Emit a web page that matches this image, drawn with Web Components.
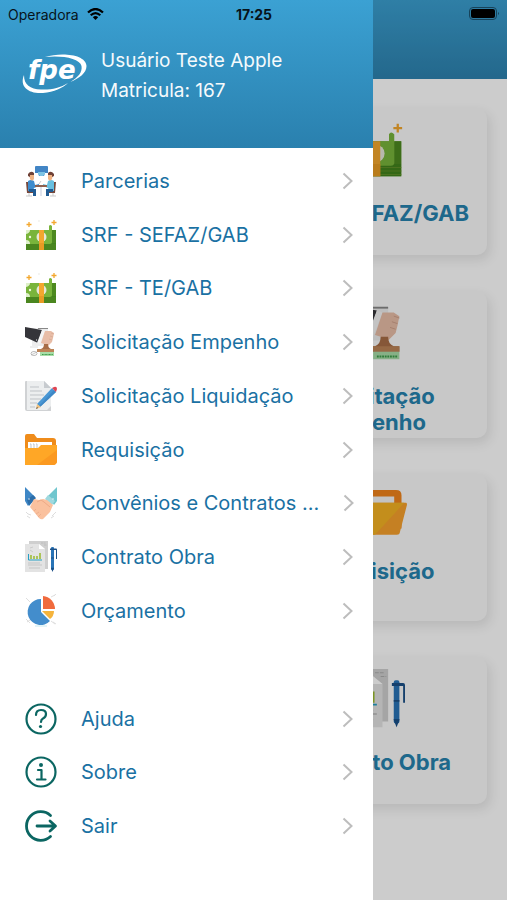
<!DOCTYPE html>
<html lang="pt-BR">
<head>
<meta charset="utf-8">
<meta name="viewport" content="width=device-width, initial-scale=1">
<title>FPE</title>
<style>
  html, body {
    height: 100%;
    margin: 0;
  }

  body {
    font-family: Inter, Roboto, "Liberation Sans", sans-serif;
    background: #fff;
    overflow: hidden;
  }
</style>
</head>
<body>
<fpe-app>
  <fpe-status-bar slot="status" data-carrier="Operadora" data-time="17:25"></fpe-status-bar>

  <fpe-drawer slot="drawer">
    <fpe-profile slot="profile" data-name="Usuário Teste Apple" data-info="Matricula: 167"></fpe-profile>
    <fpe-menu-item data-icon="meeting">Parcerias</fpe-menu-item>
    <fpe-menu-item data-icon="money">SRF - SEFAZ/GAB</fpe-menu-item>
    <fpe-menu-item data-icon="money">SRF - TE/GAB</fpe-menu-item>
    <fpe-menu-item data-icon="stamp">Solicitação Empenho</fpe-menu-item>
    <fpe-menu-item data-icon="note">Solicitação Liquidação</fpe-menu-item>
    <fpe-menu-item data-icon="folder">Requisição</fpe-menu-item>
    <fpe-menu-item data-icon="handshake">Convênios e Contratos ...</fpe-menu-item>
    <fpe-menu-item data-icon="contract">Contrato Obra</fpe-menu-item>
    <fpe-menu-item data-icon="pie">Orçamento</fpe-menu-item>
    <fpe-menu-item slot="footer" data-icon="help">Ajuda</fpe-menu-item>
    <fpe-menu-item slot="footer" data-icon="info">Sobre</fpe-menu-item>
    <fpe-menu-item slot="footer" data-icon="exit">Sair</fpe-menu-item>
  </fpe-drawer>

  <fpe-card data-icon="money">SRF - SEFAZ/GAB</fpe-card>
  <fpe-card data-icon="stamp">Solicitação Empenho</fpe-card>
  <fpe-card data-icon="openFolder">Requisição</fpe-card>
  <fpe-card data-icon="contract">Contrato Obra</fpe-card>
</fpe-app>

<script>
const icons = {
  meeting: {
    box: "0 0 32 32",
    art: `
      <path d="M11 1h11q1 0 1 1v6h-3l-1 3h-5l-1-3h-3V2q0-1 1-1z" fill="#4285c5"/>
      <path d="M13 7h7v2l-2 2h-3l-2-2z" fill="#7cc3e4"/>
      <path d="M1 17h3l1 9h5v2H2zM31 17h-3l-1 9h-5v2h8z" fill="#76483c"/>
      <path d="M4 28v3M1 31h6M28 28v3M25 31h6" stroke="#c9c9c9" fill="none"/>
      <path d="M3 16q3-2 6 0l1 4 4-1v2l-5 2-1 3H3z" fill="#3d8cce"/>
      <path d="M29 16q-3-2-6 0l-1 4-4-1v2l5 2 1 3h5z" fill="#67bfe0"/>
      <path d="M4 24h7v7H8v-4H4zM28 24h-7v7h3v-4h4z" fill="#215b93"/>
      <path d="M4 9h5v5q-2 3-4 0zM28 9h-5v5q2 3 4 0z" fill="#f0b282"/>
      <path d="M3 11V9q3-4 6-1v2H5v2zM29 11V9q-3-4-6-1v2h4v2z" fill="#704237"/>
      <path d="M10 20h12v2H10z" fill="#8e6150"/>
      <path d="M15 22h2v9h-2z" fill="#e1e4ed"/>
      <path d="m14 19 2-3" stroke="#ccc"/>`
  },
  money: {
    box: "0 0 32 32",
    art: `
      <path d="M1 11h30v20H1z" fill="#63a02c"/>
      <path d="M1 24h30v7H1z" fill="#42831c"/>
      <path d="M1 26h30M1 28h30M1 30h30" stroke="#65912a" stroke-width=".5"/>
      <path d="M27 11h4v13h-4z" fill="#4d8920"/>
      <path d="M1 11h23V7q1-2 3 0v16q0 2-2 2H4q-3 0-3-3z" fill="#79b43b"/>
      <path d="M1 11h4q0 3-4 4zM1 25v-4q4 0 4 4z" fill="#def0c9"/>
      <circle cx="5" cy="18" r="1.2" fill="#eef8dd"/>
      <circle cx="16.5" cy="18" r="5" fill="#e6e7d8"/>
      <path d="M14 11h5v20h-5z" fill="#f3a72e"/>
      <path d="M14 24h5v7h-5z" fill="#e89b24"/>
      <path d="M4 3v5M1.500 5.500h5M29 1v5M26.500 3.500h5" stroke="#f3a72e" stroke-width="1.300"/>
      <path d="M14 1v2" stroke="#e1e1d9" stroke-width=".7"/>`
  },
  stamp: {
    box: "0 0 32 32",
    art: `
      <path d="M7 2h16v18H7z" fill="#ededed"/>
      <path d="M13 2.500h10" stroke="#888"/>
      <path d="m0 1 17 3-4 13L0 11z" fill="#35353a"/>
      <path d="m17 4 3 1-5 13-3-1z" fill="#f4f4f4"/>
      <path d="M11 14h1M14 15h1" stroke="#fff"/>
      <path d="m20 5 6 0 3 2-1 5-1 4-4 4-4-2-3-1z" fill="#e8bda7"/>
      <path d="m26 7 3 1M25 10l3 1M24 13l3 1" stroke="#ce9f89" stroke-width=".5"/>
      <path d="M19 18h4q0 4 3 5h3v3H13v-3h3q3-1 3-5z" fill="#a86d46"/>
      <path d="M12 23h17v3H12z" fill="#bc8457"/>
      <path d="M15 26h14v4H15z" fill="#a8dda8"/>
      <path d="M17 28.500h11" stroke="#3d9c4a" stroke-dasharray="1 .4"/>
      <path d="M5 21h8" stroke="#ddd"/>
      <ellipse cx="9" cy="27.500" rx="3" ry="2" fill="none" stroke="#aaa" stroke-width=".8"/>
      <path d="m6 29 6-3" stroke="#aaa" stroke-width=".6"/>`
  },
  note: {
    box: "0 0 32 32",
    art: `
      <path d="M1 1h18l7 7v23H2q-2 0-2-2V2q0-1 1-1z" fill="#d0d2d4"/>
      <path d="M2 1h17l7 7v18l-4 4H2z" fill="#eceeef"/>
      <path d="M19 1v7h7z" fill="#c7cbcf"/>
      <path d="M5 7h9M5 11h12M5 15h14M5 19h11M5 23h7M5 27h5" stroke="#bfc3c7"/>
      <path d="m12 24 15-16 4 4-16 15z" fill="#4997d4"/>
      <path d="m14 26 15-16 2 2-16 15z" fill="#3f88c6"/>
      <path d="m12 24-1 5 5-2z" fill="#f1c17f"/>
      <path d="m11 29 1-2 1 1z" fill="#444"/>
      <path d="m27 8 2-1q3-1 3 2l-1 3z" fill="#de4552"/>`
  },
  folder: {
    box: "0 0 32 32",
    art: `
      <path d="M0 2q0-2 2-2h7l3 4h16q3 0 3 3v19H0z" fill="#ef8c1b"/>
      <path d="M3 8h24v10H3z" fill="#fff"/>
      <path d="M5 10h1v6H5M8 10h1v6H8M11 10h1v6h-1" stroke="#bfc4cd" fill="none"/>
      <path d="M0 14h13l3-3h16v17q-1 3-3 3H0z" fill="#ffa726"/>
      <path d="M32 16v12q-1 3-3 3H12z" fill="#fb9920"/>`
  },
  openFolder: {
    box: "0 0 70 52",
    art: `
      <path d="M4 46V2h54q6 0 6 6v36z" fill="#f0841c"/>
      <path d="M10 9h46v9H10z" fill="#f4f4f4"/>
      <path d="M12 16h57q1 0 1 2l-8 31q0 2-3 2H4z" fill="#f7a02c"/>
      <path d="M12 16h55L35 51H4z" fill="#f4b224"/>`
  },
  handshake: {
    box: "0 0 32 32",
    art: `
      <path d="m0 0 10 10-7 9-3-5z" fill="#3f87c6"/>
      <path d="m32 0-9 9 6 9 3-4z" fill="#70c6ce"/>
      <path d="m2 13 6-5 3 3-7 8z" fill="#2c6ea9"/>
      <path d="m23 8 7 6-3 4-7-6z" fill="#9fd9df"/>
      <circle cx="4" cy="12" r=".7" fill="#fff"/>
      <circle cx="28" cy="12" r=".7" fill="#fff"/>
      <path d="m9 12 5 1 4-1 4 1 6 5-3 7-7 7q-2 1-4-1L5 20z" fill="#fac19e"/>
      <path d="m12 15 4-2 3 2 6 5" fill="none" stroke="#edaa86"/>
      <path d="m9 24 2-2m0 5 3-2m-1 5 3-3" stroke="#eeaf8e"/>
      <path d="m1 25 2 2 3 1M2 29l3 2M31 25l-4 4M29 29l-3 2" stroke="#ddd" fill="none"/>`
  },
  contract: {
    box: "0 0 32 32",
    art: `
      <path d="M4 0h19v28H4z" fill="#cfcfcf"/>
      <path d="M16 2h5M19 4h3" stroke="#aaa" stroke-width=".5" stroke-dasharray="2 .6"/>
      <path d="M0 3h14l6 5v23H0z" fill="#e3e3e3"/>
      <path d="M14 3v5h6z" fill="#fff"/>
      <path d="m5 7 3-1m-3 3 3 2" stroke="#cbcbcb"/>
      <path d="M3.500 13v6H17" fill="none" stroke="#269fc4"/>
      <path d="M6 14v4M9 15v3M12 15v3M15 12v6" stroke="#9aba2d" stroke-width="1.500"/>
      <path d="M3 22h12M3 24h14M4 27h11" stroke="#b7b7b7" stroke-width=".7"/>
      <rect x="26" y="6" width="3" height="23" rx="1" fill="#2974b7"/>
      <path d="m26 27 1.500 4 1.500-4z" fill="#194f86"/>
      <path d="M25 7.500h6q1 0 1 1V18h-1V9h-6zM26 16.500h3v1h-3z" fill="#1c5187"/>
      <path d="M26 27h3" stroke="#194f86" stroke-width=".5"/>`
  },
  pie: {
    box: "0 0 32 32",
    art: `
      <path d="M16 4v13l9 9A13 13 0 1 1 16 4z" fill="#438dcc"/>
      <path d="M18 1a13 13 0 0 1 12 13H18z" fill="#f06a3d"/>
      <path d="M17 16h12q0 5-4 8z" fill="#f5b43d"/>
      <path d="m1 3 4 4M29 1l2-2M2 27l3-2m23 2 3 2M26 2l4-2M1 24l4 4m21-2 4 3" stroke="#dedede"/>
      <path d="M10 31h12" stroke="#c7eaf0"/>`
  },
  help: {
    box: "0 0 32 32",
    art: `
      <g fill="none" stroke="#0b6662" stroke-width="2.200" stroke-linecap="round" stroke-linejoin="round">
        <circle cx="16" cy="16" r="14.500"/>
        <path d="M11 12q0-5 5-5t5 4q0 3-3 4.500-2 1-2 3.500"/>
      </g>
      <circle cx="15.500" cy="23.500" r="1.600" fill="#0b6662"/>`
  },
  info: {
    box: "0 0 32 32",
    art: `
      <g fill="none" stroke="#0b6662" stroke-width="2.200" stroke-linecap="round" stroke-linejoin="round">
        <circle cx="16" cy="16" r="14.500"/>
        <path d="M13 14h3.500v9.500M12 23.500h8.500"/>
      </g>
      <circle cx="16" cy="9" r="2" fill="#0b6662"/>`
  },
  exit: {
    box: "0 0 32 32",
    art: `
      <g fill="none" stroke="#0b6662" stroke-width="2.800" stroke-linecap="round" stroke-linejoin="round">
        <path d="M25.500 5.500a14.300 14.300 0 1 0 0 21M12 16h18M25 11l5.500 5-5.500 5"/>
      </g>`
  }
};

class FpeIcon extends HTMLElement {
  connectedCallback() {
    this.attachShadow({mode: "open"});
    this.render();
  }

  render() {
    const icon = icons[this.getAttribute("data-name")];
    this.shadowRoot.innerHTML = `
      <style>
        :host {
          display: block;
          flex: none;
        }

        svg {
          display: block;
          width: 100%;
          height: 100%;
          overflow: visible;
        }
      </style>
      <svg viewBox="${icon.box}" aria-hidden="true">${icon.art}</svg>
    `;
  }
}

customElements.define("fpe-icon", FpeIcon);

class FpeStatusBar extends HTMLElement {
  connectedCallback() {
    this.attachShadow({mode: "open"});
    this.render();
  }

  render() {
    this.shadowRoot.innerHTML = `
      <style>
        :host {
          display: grid;
          grid-template-columns: 1fr auto 1fr;
          align-items: center;
          height: 28px;
          padding: 0 7px 0 8px;
          box-sizing: border-box;
          font-size: 14px;
          color: #07131a;
        }

        .carrier {
          display: flex;
          align-items: center;
          gap: 8px;
        }

        .time {
          font-weight: 700;
        }

        .battery {
          justify-self: end;
        }

        svg {
          display: block;
        }
      </style>
      <div class="carrier">
        <span>${this.getAttribute("data-carrier")}</span>
        <svg width="17" height="12" viewBox="0 0 17 12" aria-hidden="true">
          <path d="M1 4.500q7.500-7 15 0M3.700 7.300q4.800-4.400 9.600 0" fill="none" stroke="#000" stroke-width="2.200"/>
          <path d="M5.800 9.200q2.700-2.400 5.400 0L8.500 12z"/>
        </svg>
      </div>
      <span class="time">${this.getAttribute("data-time")}</span>
      <svg class="battery" width="31" height="14" viewBox="0 0 31 14" role="img" aria-label="Bateria">
        <rect x=".5" y=".5" width="27" height="12" rx="3.500" fill="none" stroke="#17435a"/>
        <rect x="2" y="2" width="24" height="9" rx="2"/>
        <path d="M29 5q2 1.500 0 3z" fill="#17435a"/>
      </svg>
    `;
  }
}

customElements.define("fpe-status-bar", FpeStatusBar);

class FpeProfile extends HTMLElement {
  connectedCallback() {
    this.attachShadow({mode: "open"});
    this.render();
  }

  render() {
    this.shadowRoot.innerHTML = `
      <style>
        :host {
          display: flex;
          gap: 14px;
          padding: 46px 21px 42px;
          background: linear-gradient(#3ba1d3, #2a80ae);
          color: #f5fafc;
          font-size: 19px;
          line-height: 30px;
        }

        svg {
          flex: none;
          margin-top: 7px;
          overflow: visible;
        }

        p {
          margin: 0;
        }
      </style>
      <svg width="66" height="42" viewBox="0 0 66 42" role="img" aria-label="fpe" fill="#fff">
        <text x="7" y="26" font-family="DejaVu Sans, Open Sans, sans-serif" font-size="26" font-weight="700" font-style="italic">fpe</text>
        <path d="M24 4C40-1 65 1 65.500 13c0 7-7 12-16 16 8-5 12-10 11-16C59 5 40 2 24 4z"/>
        <path d="M3 22C-2 34 8 41 22 40c11-1 20-5 25-10-8 5-17 7-27 6.500C9 36 3 32 3 22z"/>
      </svg>
      <div>
        <p>${this.getAttribute("data-name")}</p>
        <p>${this.getAttribute("data-info")}</p>
      </div>
    `;
  }
}

customElements.define("fpe-profile", FpeProfile);

class FpeMenuItem extends HTMLElement {
  connectedCallback() {
    this.attachShadow({mode: "open"});
    this.render();
  }

  render() {
    this.shadowRoot.innerHTML = `
      <style>
        :host {
          display: flex;
          flex: 1;
        }

        a {
          flex: 1;
          display: flex;
          align-items: center;
          gap: 24px;
          min-width: 0;
          padding: 0 20px 0 25px;
          font-size: 20px;
          line-height: 26px;
          color: #1a71a3;
          text-decoration: none;
        }

        fpe-icon {
          width: 32px;
          height: 32px;
        }

        span {
          flex: 1;
          white-space: nowrap;
        }

        .chevron {
          flex: none;
        }
      </style>
      <a href="#">
        <fpe-icon data-name="${this.getAttribute("data-icon")}"></fpe-icon>
        <span><slot></slot></span>
        <svg class="chevron" width="11" height="18" viewBox="0 0 11 18" aria-hidden="true">
          <path d="m1.500 1.500 8 7.500-8 7.500" fill="none" stroke="#bdbdbd" stroke-width="2"/>
        </svg>
      </a>
    `;
  }
}

customElements.define("fpe-menu-item", FpeMenuItem);

class FpeDrawer extends HTMLElement {
  connectedCallback() {
    this.attachShadow({mode: "open"});
    this.render();
  }

  render() {
    this.shadowRoot.innerHTML = `
      <style>
        :host {
          display: flex;
          flex-direction: column;
          background: #fff;
        }

        nav {
          flex: 1;
          display: flex;
          flex-direction: column;
          padding: 6px 0 47px;
        }

        .spacer {
          flex: 1;
        }
      </style>
      <slot name="profile"></slot>
      <nav>
        <slot></slot>
        <div class="spacer"></div>
        <slot name="footer"></slot>
      </nav>
    `;
  }
}

customElements.define("fpe-drawer", FpeDrawer);

class FpeCard extends HTMLElement {
  connectedCallback() {
    this.attachShadow({mode: "open"});
    this.render();
  }

  render() {
    const name = this.getAttribute("data-icon");
    this.shadowRoot.innerHTML = `
      <style>
        :host {
          display: block;
          border-radius: 10px;
          background: #fafafa;
          box-shadow: 3px 5px 12px rgba(0, 0, 0, 0.1);
        }

        a {
          display: flex;
          flex-direction: column;
          align-items: center;
          gap: 20px;
          min-height: 147px;
          box-sizing: border-box;
          padding: 12px 12px 0;
          font-size: 22px;
          font-weight: 700;
          line-height: 26px;
          text-align: center;
          text-decoration: none;
          color: #2682ae;
        }

        fpe-icon {
          width: 64px;
          height: 60px;
        }

        fpe-icon[data-name="money"] {
          width: 56px;
        }

        fpe-icon[data-name="openFolder"] {
          height: 52px;
        }
      </style>
      <a href="#">
        <fpe-icon data-name="${name}"></fpe-icon>
        <span><slot></slot></span>
      </a>
    `;
  }
}

customElements.define("fpe-card", FpeCard);

class FpeApp extends HTMLElement {
  connectedCallback() {
    this.attachShadow({mode: "open"});
    this.render();
  }

  render() {
    this.shadowRoot.innerHTML = `
      <style>
        :host {
          display: block;
          position: relative;
          min-height: 100%;
          overflow: hidden;
        }

        header {
          height: 79px;
          background: linear-gradient(#3b9fd0, #2d82af);
        }

        /* the cards shown here fill the right-hand column */
        main {
          display: grid;
          grid-template-columns: 1fr 1fr;
          gap: 36px 20px;
          padding: 29px 20px;
        }

        ::slotted(fpe-card) {
          grid-column: 2;
        }

        .scrim {
          position: absolute;
          inset: 0;
          background: rgba(0, 0, 0, 0.2);
        }

        ::slotted(fpe-drawer) {
          position: absolute;
          inset: 0 auto 0 0;
          width: 73.500%;
        }

        ::slotted(fpe-status-bar) {
          position: absolute;
          inset: 0 0 auto;
        }
      </style>
      <header></header>
      <main><slot></slot></main>
      <div class="scrim"></div>
      <slot name="drawer"></slot>
      <slot name="status"></slot>
    `;
  }
}

customElements.define("fpe-app", FpeApp);
</script>
</body>
</html>
